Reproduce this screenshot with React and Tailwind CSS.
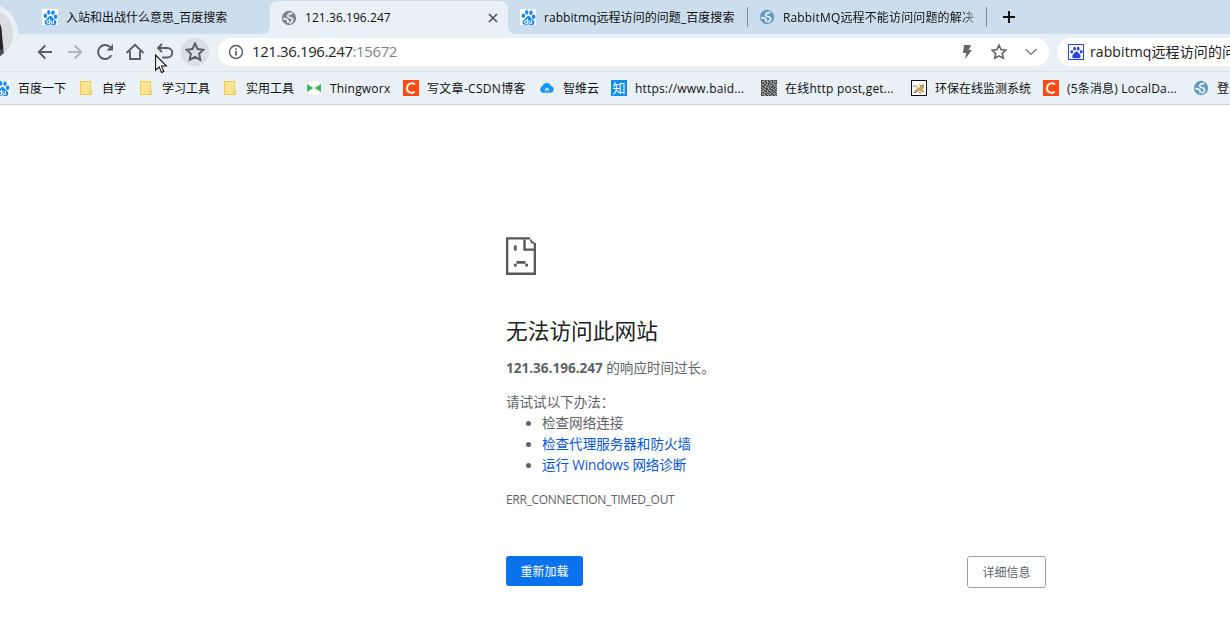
import { SiBaidu } from "react-icons/si";

function PawIcon() {
  return (
    <span className="w-4 h-4 bg-white flex items-center justify-center shrink-0">
      <SiBaidu size={15} color="#1589f5" />
    </span>
  );
}

function GlobeIcon({ color }) {
  return (
    <svg width="16" height="16" viewBox="0 0 16 16" className="shrink-0">
      <circle cx="8" cy="8" r="7.200" fill={color} />
      <g fill="none" stroke="#e4edf6" strokeWidth="1.800">
        <path d="M11.500 3.200L7.800 4 6.600 5.800 7.500 7.300l3 .7 1.300 1.600-1 2.200L8.500 13.500" />
        <path d="M2 8.500l3.500.7 1.700 1.800-.4 2" />
      </g>
    </svg>
  );
}

function FolderIcon() {
  return (
    <svg width="16" height="16" viewBox="0 0 16 16" className="shrink-0">
      <path d="M2.500 1.500h10v9.500h1v3.500h-11z" fill="#ffe394" stroke="#f5c850" />
      <path d="M11.500 14.500v-3.500h2" fill="none" stroke="#f5c850" />
    </svg>
  );
}

function ThingworxIcon() {
  return (
    <svg width="16" height="16" viewBox="0 0 16 16" className="shrink-0">
      <path d="M8 0l7 4v8l-7 4-7-4V4z" fill="#fff" />
      <path d="M1 4l6.300 4L1 12zM15 4L8.700 8l6.300 4z" fill="#3dbb54" />
    </svg>
  );
}

function CsdnIcon() {
  return (
    <svg width="16" height="16" viewBox="0 0 16 16" className="shrink-0">
      <rect width="16" height="16" fill="#fc4a10" />
      <path d="M12.200 4.300C9.300 2.500 4.200 3 4 8.200c0 4.600 4.400 5.400 7.800 3.700" fill="none" stroke="#fff" strokeWidth="1.900" />
    </svg>
  );
}

function CloudIcon() {
  return (
    <svg width="16" height="16" viewBox="0 0 16 16" className="shrink-0">
      <path d="M4.200 12.500a3.400 3.400 0 0 1-1-6.600 4.500 4.500 0 0 1 8.600-.2A3.500 3.500 0 0 1 11.500 12.500z" fill="#1296f5" transform="translate(.3 .3)" />
      <path d="M5.200 10.300l2.800-2.800 2.800 2.800H9.200v2.700H6.800v-2.700z" fill="#e9f0f6" />
      <path d="M7.200 9.800h1.600v3.400H7.200z" fill="#1296f5" />
    </svg>
  );
}

function ZhihuIcon() {
  return (
    <span className="w-4 h-4 bg-[#0a8cf0] text-white text-[13px] leading-4 text-center shrink-0">
      知
    </span>
  );
}

const qrRows = [
  "1110110100110111",
  "1000100110010001",
  "1010110011010101",
  "1110010110010111",
  "0001100101100000",
  "1101101100011010",
  "0110001011011001",
  "1011010010110110",
  "1100111001001101",
  "0010011011110010",
  "1101100100011011",
  "0000110110110100",
  "1110010011001110",
  "1010101100110001",
  "1000110010111010",
  "1110011011001101",
];

function QrIcon() {
  return (
    <svg width="16" height="16" viewBox="0 0 16 16" className="shrink-0">
      <rect width="16" height="16" fill="#9a9a9a" />
      {qrRows.map((row, y) =>
        row.split("").map((cell, x) =>
          cell === "1" ? (
            <rect key={`${x}-${y}`} x={x} y={y} width="1" height="1" fill="#484848" />
          ) : null
        )
      )}
    </svg>
  );
}

function TomcatIcon() {
  return (
    <svg width="16" height="16" viewBox="0 0 16 16" className="shrink-0">
      <rect x=".5" y=".5" width="15" height="15" fill="#fff" stroke="#111" />
      <path d="M8 3.500l1.500 1.200h2L13 3.500v4l-1 1.500 1.300 3-2.300.5-2-1.500-2.500.5-2.500 1.500H2.500L5 9.500l2-2h2z" fill="#d0a25c" />
      <path d="M2 6.800l2-1.300 2.500 1.800M3 12.500l3-1M9.800 6.200h.8M11.700 6.200h.8M8 12.300l2 .7" stroke="#555" strokeWidth=".8" fill="none" />
    </svg>
  );
}

const bookmarks = [
  { icon: <PawIcon />, label: "百度一下", width: "w-12" },
  { icon: <FolderIcon />, label: "自学", width: "w-6" },
  { icon: <FolderIcon />, label: "学习工具", width: "w-12" },
  { icon: <FolderIcon />, label: "实用工具", width: "w-12" },
  { icon: <ThingworxIcon />, label: "Thingworx", width: "w-[61px] tracking-[0.2px]" },
  { icon: <CsdnIcon />, label: "写文章-CSDN博客", width: "w-[100px] tracking-[0.3px]" },
  { icon: <CloudIcon />, label: "智维云", width: "w-9" },
  { icon: <ZhihuIcon />, label: "https://www.baid...", width: "w-[114px] tracking-[0.18px]" },
  { icon: <QrIcon />, label: "在线http post,get...", width: "w-[114px] tracking-[0.22px]" },
  { icon: <TomcatIcon />, label: "环保在线监测系统", width: "w-24" },
  { icon: <CsdnIcon />, label: "(5条消息) LocalDa...", width: "w-[114px] tracking-[0.18px]" },
  { icon: <GlobeIcon color="#6699bf" />, label: "登录", width: "w-6" },
];

function TabStrip() {
  return (
    <div className="flex h-[34px] text-xs text-[#111]">
      <div className="w-[270px] shrink-0 bg-[#ccdded] rounded-br-lg flex items-center gap-2 pl-[42px]">
        <PawIcon />
        <span className="pt-0.5">入站和出战什么意思_百度搜索</span>
      </div>
      <div className="w-[238px] shrink-0 bg-[linear-gradient(#ccdded_17px,#e9f0f6_17px)] pt-px">
        <div className="h-full bg-[#e9f0f6] rounded-t-lg flex items-center gap-2 pl-[11px] pr-[10px]">
          <GlobeIcon color="#80858a" />
          <span className="flex-1 tracking-[0.06px]">121.36.196.247</span>
          <svg width="10" height="10" viewBox="0 0 10 10" stroke="#555" strokeWidth="1.700">
            <path d="M1 1l8 8M9 1l-8 8" />
          </svg>
        </div>
      </div>
      <div className="flex-1 bg-[#ccdded] rounded-bl-lg flex items-center pl-3">
        <div className="w-[227px] flex items-center gap-2">
          <PawIcon />
          <span className="pt-0.5 tracking-[0.06px]">rabbitmq远程访问的问题_百度搜索</span>
        </div>
        <div className="w-px h-5 bg-[#808c98]" />
        <div className="w-[238px] flex items-center gap-2 pl-[11px]">
          <GlobeIcon color="#6699bf" />
          <span className="w-[198px] pt-0.5 tracking-[0.15px] whitespace-nowrap mask-r-from-90% mask-r-to-100%">
            RabbitMQ远程不能访问问题的解决
          </span>
        </div>
        <div className="w-px h-5 bg-[#808c98]" />
        <svg width="12" height="12" viewBox="0 0 12 12" stroke="#111" strokeWidth="2" className="ml-4">
          <path d="M6 0v12M0 6h12" />
        </svg>
      </div>
    </div>
  );
}

function NavButton({ children, className = "" }) {
  return (
    <button className="w-[30px] h-[30px] shrink-0 flex items-center justify-center">
      <span className={`w-7 h-7 rounded-full flex items-center justify-center ${className}`}>
        <svg width="20" height="20" viewBox="0 0 20 20" fill="none" stroke="#5a5e62" strokeWidth="1.900">
          {children}
        </svg>
      </span>
    </button>
  );
}

const starPath =
  "M10 1.500l2.500 5.500 6 .7-4.400 4.100 1.200 6L10 14.800l-5.300 3 1.200-6L1.500 7.700l6-.7z";

function Toolbar() {
  return (
    <div className="h-[37px] flex items-center pl-[30px] pb-px">
      <NavButton>
        <path d="M17 10H4M10.300 3.500L3.800 10l6.500 6.500" />
      </NavButton>
      <NavButton className="opacity-40">
        <path d="M3 10h13M9.700 3.500l6.500 6.500-6.500 6.500" />
      </NavButton>
      <NavButton>
        <path d="M16.300 13.200A7 7 0 1 1 15 5" />
        <path d="M18 2v6.500h-6.500z" fill="#5a5e62" stroke="none" />
      </NavButton>
      <NavButton>
        <path d="M1.500 11L10 2.800l8.500 8.200M5 9v8h10V9" />
      </NavButton>
      <NavButton>
        <path d="M3 6h9.500a4.700 4.700 0 0 1 0 9.500H7M7 2L3 6l4 4" />
      </NavButton>
      <NavButton className="bg-[#d9dfe5]">
        <path d={starPath} />
      </NavButton>
      <div className="ml-2 w-[831px] h-7 shrink-0 bg-white rounded-full flex items-center pl-[10px] pr-[9px]">
        <svg width="16" height="16" viewBox="0 0 16 16" fill="none" stroke="#555a5f" strokeWidth="1.400">
          <circle cx="8" cy="8" r="6.500" />
          <path d="M8 7v4.500M8 4.300v1.500" strokeWidth="1.700" />
        </svg>
        <span className="flex-1 ml-2 pb-px text-[15px] tracking-[-0.4px] text-[#222]">
          121.36.196.247<span className="text-[#808488]">:15672</span>
        </span>
        <svg width="10" height="14" viewBox="0 0 10 14" fill="#666" className="mr-[19px]">
          <path d="M2 0h7L6.800 5H10L3.200 14l1-6H1z" />
        </svg>
        <svg width="16" height="16" viewBox="0 0 20 20" fill="none" stroke="#5f6368" strokeWidth="2" className="mr-[17px]">
          <path d={starPath} />
        </svg>
        <svg width="14" height="16" viewBox="0 0 14 16" fill="none" stroke="#777" strokeWidth="1.200" className="mr-0.5">
          <path d="M1.500 5L7 10.500 12.500 5" />
        </svg>
      </div>
      <div className="ml-2 h-7 w-[240px] shrink-0 bg-white rounded-l-full flex items-center pl-[11px] gap-1.5">
        <span className="w-4 h-4 border border-[#2744d9] flex items-center justify-center shrink-0">
          <svg width="13" height="13" viewBox="0 0 13 13" fill="#2a42e0">
            <ellipse cx="1.800" cy="5.800" rx="1.400" ry="1.800" />
            <ellipse cx="4.600" cy="2.700" rx="1.400" ry="1.900" />
            <ellipse cx="8.200" cy="2.700" rx="1.400" ry="1.900" />
            <ellipse cx="11.200" cy="5.800" rx="1.400" ry="1.800" />
            <path d="M6.500 5.500c1.500 0 2 1.500 3 2.500 2 1.700 1.200 4.300-.8 4.300H4.200c-2 0-2.700-2.600-.8-4.300 1.100-1 1.600-2.500 3.100-2.500z" />
          </svg>
        </span>
        <span className="text-sm tracking-[0.1px] text-[#222] whitespace-nowrap">rabbitmq远程访问的问题</span>
      </div>
    </div>
  );
}

function BookmarksBar() {
  return (
    <div className="h-[34px] border-t border-[#d8e2ec] border-b border-b-[#cbd5df] flex items-center gap-3 text-xs text-[#111] -ml-1.5">
      {bookmarks.map((item, i) => (
        <div key={i} className="flex items-center gap-2 shrink-0">
          {item.icon}
          <span className={`whitespace-nowrap pt-0.5 ${item.width}`}>{item.label}</span>
        </div>
      ))}
    </div>
  );
}

function Avatar() {
  return (
    <div className="absolute -left-[44px] top-[3px] w-[62px] h-[62px] rounded-full bg-[#dcdcde] border-[5px] border-[#e9f0f6] overflow-hidden">
      <svg width="52" height="52" viewBox="0 0 52 52">
        <path d="M36 12c4 3 5 9 5 15l1.500 15-6.500 6z" fill="#26242a" />
        <path d="M38 42l4-1 1 4-5 4z" fill="#4a4b60" />
      </svg>
    </div>
  );
}

function SadFile() {
  return (
    <svg width="30" height="38" viewBox="0 0 30 38" fill="#585858" className="block">
      <path d="M0 .3h24v2.200H2.300v32.900H27.700V13.700H17.300v-11h2.400v8.700H27.700V5.700H30V38H0z" />
      <path d="M24 2.500h2v2h2v2h-3v-2h-1z" />
      <path d="M8 8.500h2.700v5H8zM10.500 24h9v2.700h-9zM8 26.700h2.700v2.700H8zM19.300 26.700H22v2.700h-2.700z" />
    </svg>
  );
}

function ErrorPage() {
  return (
    <main className="w-[540px] ml-[506px] pt-[132px] text-[#5f6368] text-[13.55px] leading-[21px]">
      <SadFile />
      <h1 className="mt-[41px] text-[21.7px] leading-[30px] text-[#202124]">无法访问此网站</h1>
      <p className="mt-3">
        <strong>121.36.196.247</strong> 的响应时间过长。
      </p>
      <p className="mt-[13px]">请试试以下办法：</p>
      <ul className="list-disc pl-9">
        <li>检查网络连接</li>
        <li className="text-[#0b57d0] marker:text-[#5f6368]">检查代理服务器和防火墙</li>
        <li className="text-[#0b57d0] marker:text-[#5f6368] tracking-[-0.12px]">运行 Windows 网络诊断</li>
      </ul>
      <p className="mt-[13px] text-xs leading-[21px] tracking-[-0.3px]">ERR_CONNECTION_TIMED_OUT</p>
      <div className="mt-[46px] flex justify-between items-start text-xs">
        <button className="w-[77px] h-[30px] pt-0.5 rounded-[3px] bg-[#0a73eb] text-white">重新加载</button>
        <button className="w-[79px] h-8 pt-0.5 rounded-[3px] border border-[#9aa0a6]">详细信息</button>
      </div>
    </main>
  );
}

function Cursor() {
  return (
    <svg width="13" height="20" viewBox="0 0 13 20" className="absolute left-[155px] top-[54px]">
      <path d="M.6 1v15.200l3.500-3.300 2.500 5.600 2.300-1-2.500-5.500h5z" fill="#fff" stroke="#111" strokeWidth="1.100" />
    </svg>
  );
}

function App() {
  return (
    <div className="relative w-[1230px] h-[637px] overflow-hidden bg-white font-['Open_Sans','Noto_Sans_CJK_SC',sans-serif]">
      <header className="bg-[#e9f0f6] h-[105px] overflow-hidden">
        <TabStrip />
        <Toolbar />
        <BookmarksBar />
      </header>
      <ErrorPage />
      <Avatar />
      <Cursor />
    </div>
  );
}

export default App;
